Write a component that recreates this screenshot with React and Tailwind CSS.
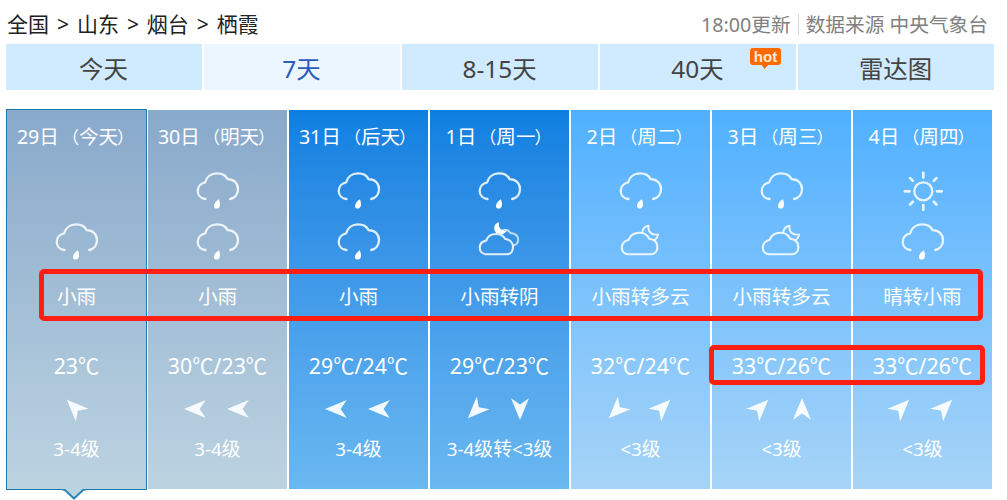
// src/App.jsx
import React from 'react';
import clsx from 'clsx';

const TABS = [
  { label: '今天' },
  { label: '7天', active: true },
  { label: '8-15天' },
  { label: '40天', hot: true },
  { label: '雷达图' },
];

const TONES = {
  past: 'bg-linear-to-b from-[#89a9cb] to-[#bcd3e1]',
  dark: 'bg-linear-to-b from-[#0d7fe0] to-[#6ab8f1]',
  light: 'bg-linear-to-b from-[#4fb0ff] to-[#a6d4f7]',
};

const DAYS = [
  { date: '29日', name: '今天', tone: 'past', icons: [null, 'rain'], text: '小雨', temps: [23], wind: ['nw'], level: '3-4级', current: true },
  { date: '30日', name: '明天', tone: 'past', icons: ['rain', 'rain'], text: '小雨', temps: [30, 23], wind: ['w', 'w'], level: '3-4级' },
  { date: '31日', name: '后天', tone: 'dark', icons: ['rain', 'rain'], text: '小雨', temps: [29, 24], wind: ['w', 'w'], level: '3-4级' },
  { date: '1日', name: '周一', tone: 'dark', icons: ['rain', 'overcast'], text: '小雨转阴', temps: [29, 23], wind: ['sw', 's'], level: '3-4级转<3级' },
  { date: '2日', name: '周二', tone: 'light', icons: ['rain', 'cloudy'], text: '小雨转多云', temps: [32, 24], wind: ['sw', 'ne'], level: '<3级' },
  { date: '3日', name: '周三', tone: 'light', icons: ['rain', 'cloudy'], text: '小雨转多云', temps: [33, 26], wind: ['ne', 'n'], level: '<3级' },
  { date: '4日', name: '周四', tone: 'light', icons: ['sun', 'rain'], text: '晴转小雨', temps: [33, 26], wind: ['ne', 'ne'], level: '<3级' },
];

// Rotation of the wind arrow, and the shift that keeps diagonals centred
const WIND = {
  n: 'rotate(0)',
  s: 'rotate(180)',
  w: 'rotate(-90)',
  ne: 'rotate(45) translate(0 -2)',
  nw: 'rotate(-45) translate(0 -2)',
  sw: 'rotate(-135) translate(0 -2)',
};

const WeatherIcon = ({ type }) => (
  <svg width="44" height="40" viewBox="0 0 44 40" fill="none" stroke="#fff" strokeOpacity="0.85" strokeWidth="2.3" strokeLinecap="round" strokeLinejoin="round">
    {type === 'rain' && (
      <>
        <path d="M9.5 28C5 27.5 1.7 24.4 1.7 20C1.7 15.6 5 12.2 9.2 11.3C10.5 6 15 2.4 21 2.4C26 2.4 30 4.8 31.6 8.2C38 8.2 42 12.5 42 18C42 23 39 27 34.2 28" />
        <path d="M22.8 28.2C24.8 32.2 24.4 37.6 20.8 37.6C16.6 37.6 16.8 32 22.8 28.2Z" fill="#fff" stroke="none" />
      </>
    )}
    {type === 'cloudy' && (
      <>
        <path d="M9.5 32.2H32C36 32.2 38.4 29 38.4 25C38.4 20.5 35 17.5 30.3 16.8C28.5 13 25 10.7 20.5 10.7C15 10.7 11 13.5 9.5 18C5.5 18.8 2.8 22 2.8 25.8C2.8 29.5 5.5 32.2 9.5 32.2Z" strokeWidth="2.1" />
        <path d="M23.2 10.5C23.8 6.5 26 4.2 29.6 3.8C28.6 9.5 32.5 13.6 39.2 12.4C38.8 15 37.6 17 35.4 18.6" strokeWidth="1.9" />
      </>
    )}
    {type === 'overcast' && (
      <>
        <path d="M8 32.2H29C33 32.2 35 29 35 25C35 20.8 32 17.6 27.3 17C25.5 14 22 12 18 12C13 12 9.6 14.6 8.2 18.6C4.2 19.2 1.8 22 1.8 25.8C1.8 29.5 4.4 32.2 8 32.2Z" strokeWidth="2.1" />
        <path d="M25 8.2C28.5 7 31 8.6 32.4 11C37.6 11.4 40.2 14 40.2 17.6C40.2 20.6 38.6 22.6 36 23.4" strokeWidth="1.9" strokeOpacity="0.7" />
        <path d="M21 0.3C18 0.8 16.2 3 16.2 6C16.2 8 17 9.6 18.4 11C21 11 23 12 24.4 12.4C26.4 11.6 28 10.4 28.8 8.6C23.6 9.6 20 6 21 0.3Z" fill="#fff" stroke="none" />
      </>
    )}
    {type === 'sun' && (
      <>
        <circle cx="22.3" cy="20.3" r="9" />
        <path d="M22.3 1.8V6.6M22.3 34V38.8M3.8 20.3H8.6M36 20.3H40.8M9.1 7.1L11.8 9.8M35.5 7.1L32.8 9.8M9.1 33.5L11.8 30.8M35.5 33.5L32.8 30.8" strokeWidth="2.7" />
      </>
    )}
  </svg>
);

const WindArrow = ({ dir }) => (
  <svg width="26" height="26" viewBox="-13 -13 26 26" className="overflow-visible">
    <path d="M0 -11L9 10.8L0 4.6L-9 10.8Z" fill="#fbfdff" fillOpacity="0.95" transform={WIND[dir]} />
  </svg>
);

const HotBadge = () => (
  <span className="absolute left-[150px] top-[4px] flex h-[17px] w-[31px] items-center justify-center rounded-[3px] bg-[#ff6a00] pb-px font-['Liberation_Sans',sans-serif] text-[15px] font-bold leading-none text-[#ffe9d8]">
    hot
    <svg width="8" height="5" viewBox="0 0 8 5" className="absolute left-[11px] top-[16px]">
      <path d="M0 0H8L3.5 5Z" fill="#ff6a00" />
    </svg>
  </span>
);

const DayColumn = ({ day }) => (
  <div
    className={clsx(
      'relative flex shrink-0 flex-col items-center whitespace-nowrap text-white',
      TONES[day.tone],
      day.current ? '-mr-px -mt-px h-[381px] w-[141px] border border-[#1b7aae]' : 'h-[379px] w-[139px]'
    )}
  >
    <div className="mt-[11px] h-8 text-[19.6px] leading-8">
      {day.date}
      <span className="ml-[3px] text-[17px]">（</span>
      {day.name}
      <span className="-ml-px mr-[2px] text-[17px]">）</span>
    </div>
    <div className="mt-[18px] h-10 pl-px">{day.icons[0] && <WeatherIcon type={day.icons[0]} />}</div>
    <div className="mt-[11px] h-10 pl-px">{day.icons[1] && <WeatherIcon type={day.icons[1]} />}</div>
    <div className="mt-[19px] h-8 text-[19.6px] leading-8">{day.text}</div>
    <div className="mt-[36px] h-8 text-[21.3px] leading-8">
      {day.temps.map((t, i) => (
        <React.Fragment key={i}>
          {i > 0 && '/'}
          {t}
          <span className="font-['Noto_Sans_CJK_SC',sans-serif]">℃</span>
        </React.Fragment>
      ))}
    </div>
    <div className="mt-[15px] flex h-[26px] gap-[17px] pr-[2px]">
      {day.wind.map((dir, i) => (
        <WindArrow key={i} dir={dir} />
      ))}
    </div>
    <div className="mt-[11px] h-8 text-[18.8px] leading-8">{day.level}</div>
    {day.current && (
      <svg width="24" height="11" viewBox="0 0 24 11" className="absolute left-[55px] top-[379px]">
        <path d="M0 0H24L12 11Z" fill="#bcd3e1" />
        <path d="M0 0.5H2.5L12 9.4L21.5 0.5H24" fill="none" stroke="#2a82b2" strokeWidth="1.8" />
      </svg>
    )}
  </div>
);

const App = () => {
  return (
    <div className="relative h-[500px] w-[1007px] overflow-hidden bg-white font-['Noto_Sans','Noto_Sans_CJK_SC',sans-serif]">
      <header className="flex h-[44px] items-center justify-between pl-[7px] pr-[19px] pt-[5px] whitespace-nowrap">
        <div className="text-[21px] text-[#222] [word-spacing:2.5px]">全国 &gt; 山东 &gt; 烟台 &gt; 栖霞</div>
        <div className="flex items-center text-[19.7px] text-[#808080]">
          <span>18:00更新</span>
          <span className="ml-[7px] mr-[7px] h-[21px] w-px bg-[#d4d4dc]" />
          <span>数据来源 中央气象台</span>
        </div>
      </header>

      <nav className="ml-[6px] flex gap-[2px]">
        {TABS.map((tab) => (
          <div
            key={tab.label}
            className={clsx(
              'relative flex h-[46px] w-[196px] items-center justify-center pr-px pt-[4px] text-[24.4px]',
              tab.active ? 'bg-[#ebf6ff] text-[#2b5bbb]' : 'bg-[#d0eaff] text-[#444]'
            )}
          >
            {tab.label}
            {tab.hot && <HotBadge />}
          </div>
        ))}
      </nav>

      <div className="ml-[6px] mt-[20px] flex gap-[2px]">
        {DAYS.map((day) => (
          <DayColumn key={day.date} day={day} />
        ))}
      </div>

      {/* Marcos rojos sobre la descripción y las temperaturas */}
      <div className="absolute left-[39px] top-[269px] h-[52px] w-[944px] rounded-[5px] border-[5px] border-[#ff1e12]" />
      <div className="absolute left-[709px] top-[345px] h-[40px] w-[276px] rounded-[5px] border-[5px] border-[#ff1e12]" />
    </div>
  );
};

export default App;
